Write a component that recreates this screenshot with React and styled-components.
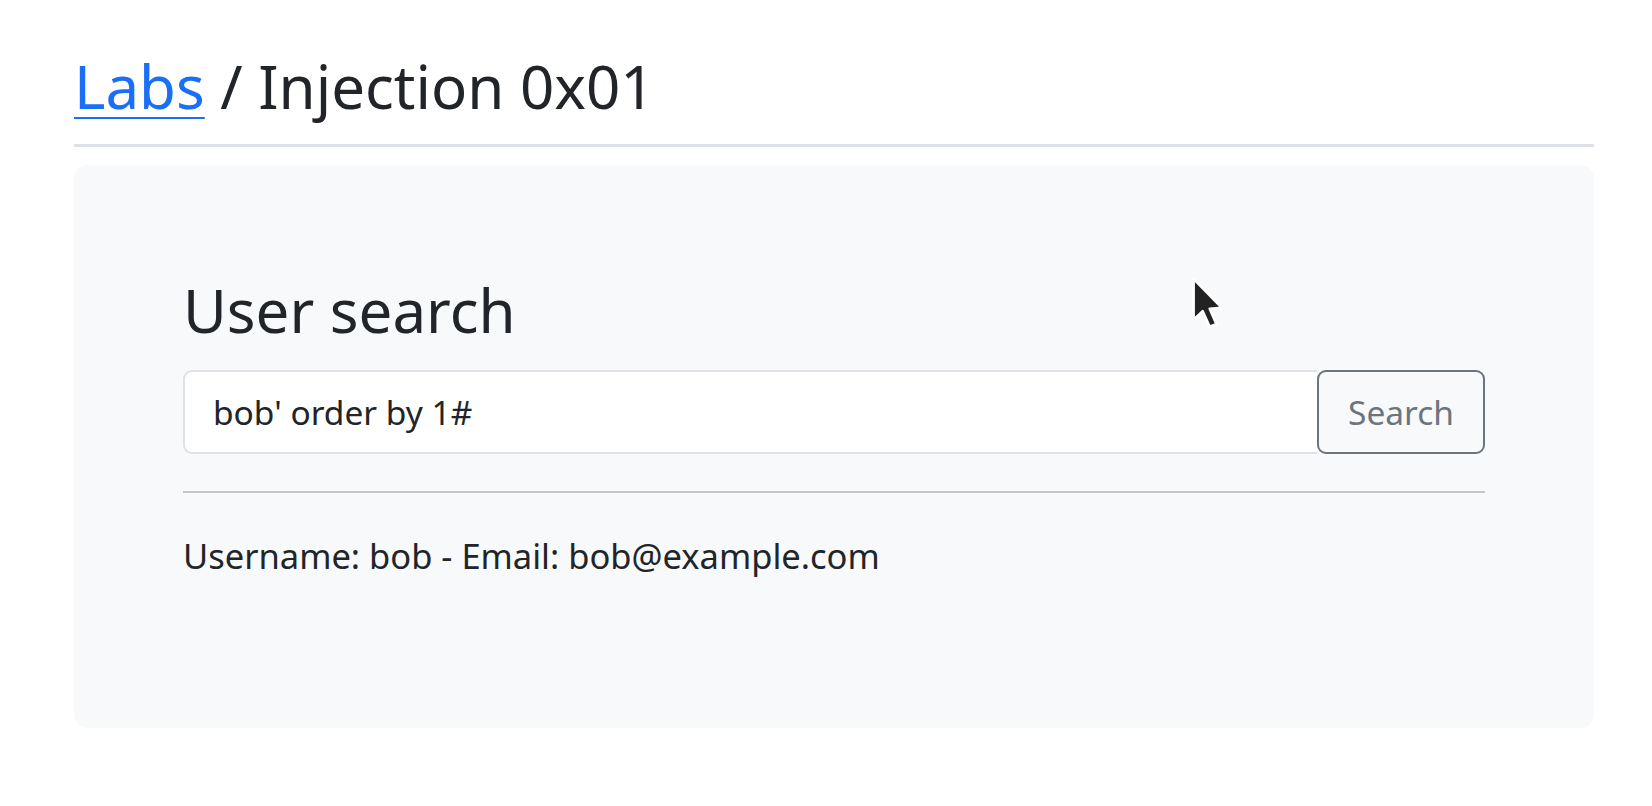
import React from 'react'
import styled, { createGlobalStyle } from 'styled-components';

const Global = createGlobalStyle`
    body {
        margin: 0;
        background: #fff;
        font-family: "Noto Sans", "Open Sans", sans-serif;
        color: #212529;
    }
`

const Page = styled.div`
    position: relative;
    width: 1520px;
    margin-left: 74px;
    padding-top: 46px;
`

const Title = styled.h1`
    margin: 0;
    font-size: 60px;
    font-weight: 400;
    line-height: 80px;
    color: #212529;
`

const Crumb = styled.a`
    color: #1a6ef8;
    text-decoration: underline;
    text-decoration-thickness: 2px;
    text-underline-offset: 8px;
`

const Rule = styled.hr`
    margin: 18px 0 0;
    border: 0;
    border-top: 3px solid #dee2e6;
`

const Panel = styled.div`
    margin-top: 18px;
    background: #f8f9fa;
    border-radius: 14px;
    padding: 108px 109px 147px;
`

const Heading = styled.h2`
    margin: 0;
    font-size: 60px;
    font-weight: 400;
    line-height: 74px;
`

const InputGroup = styled.div`
    display: flex;
    margin-top: 23px;
    height: 84px;
`

const Field = styled.input`
    flex: 1;
    min-width: 0;
    box-sizing: border-box;
    height: 100%;
    border: 2px solid #dee2e6;
    border-right: 0;
    border-radius: 9px 0 0 9px;
    background: #fff;
    padding: 0 28px;
    font-family: inherit;
    font-size: 33.5px;
    color: #212529;
    outline: none;
`

const Button = styled.button`
    box-sizing: border-box;
    width: 168px;
    height: 100%;
    border: 2px solid #6c757d;
    border-radius: 9px;
    background: transparent;
    color: #6c757d;
    font-family: inherit;
    font-size: 33.5px;
    padding: 0;
`

const Divider = styled.hr`
    margin: 37px 0 0;
    border: 0;
    border-top: 2px solid #c4c6c8;
`

const Result = styled.p`
    margin: 37px 0 0;
    font-size: 34.5px;
    line-height: 51px;
`

const Cursor = styled.svg`
    position: absolute;
    left: 1116px;
    top: 275px;
`

const App = () => {
    return (
        <>
            <Global />
            <Page>
                <Title><Crumb href="#">Labs</Crumb> / Injection 0x01</Title>
                <Rule />
                <Panel>
                    <Heading>User search</Heading>
                    <InputGroup>
                        <Field defaultValue="bob' order by 1#" />
                        <Button>Search</Button>
                    </InputGroup>
                    <Divider />
                    <Result>Username: bob - Email: bob@example.com</Result>
                </Panel>
                <Cursor width="36" height="58" viewBox="0 0 15 24">
                    <path d="M1.5 1.5 L1.5 18.5 L5.3 15 L8.2 21.5 L11 20.3 L8.2 14 L13.3 13.6 Z" fill="#222" stroke="#fff" strokeWidth="1.1" strokeLinejoin="round" />
                </Cursor>
            </Page>
        </>
    )
}

export default App
